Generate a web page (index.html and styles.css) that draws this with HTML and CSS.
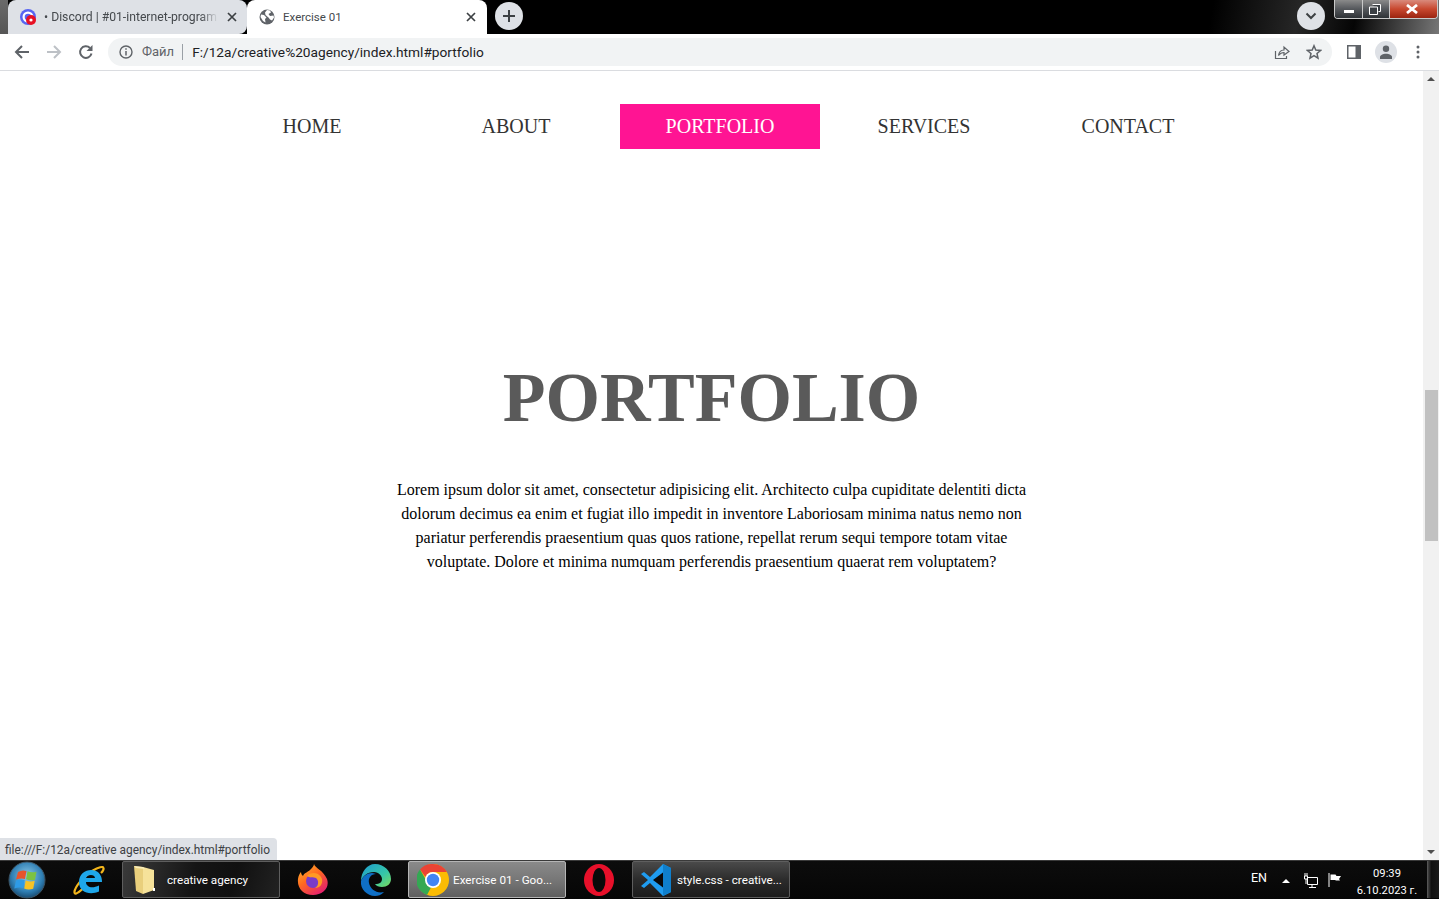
FILE: index.html
```html
<!DOCTYPE html>
<html lang="en">
<head>
<meta charset="utf-8">
<title>Exercise 01</title>
<link rel="stylesheet" href="styles.css">
</head>
<body>
<div class="screen">
  <header class="tabstrip">
    <div class="tab tab-inactive">
      <svg class="favicon" width="16" height="16" viewBox="0 0 16 16"><circle cx="8" cy="8" r="8" fill="#5865f2"/><circle cx="8" cy="8" r="4.4" fill="none" stroke="#fff" stroke-width="2.2"/><circle cx="11" cy="11" r="5" fill="#e81123"/><circle cx="11" cy="11" r="1.6" fill="#fff"/></svg>
      <span class="tab-title fade">• Discord | #01-internet-program</span>
      <svg class="tab-close" width="10" height="10" viewBox="0 0 10 10"><path d="M1 1l8 8M9 1l-8 8" stroke="#3c4043" stroke-width="1.7"/></svg>
    </div>
    <div class="tab tab-active">
      <svg class="favicon" width="16" height="16" viewBox="0 0 16 16"><circle cx="8" cy="8" r="7.5" fill="#5f6368"/><path d="M2 5.500l3 .5 2.500 2.500L6 10l.5 3.500L4 12 1.500 8zM8 1l3 .5 1 2-2.500 1.500L11 7l3.500-.5.500 2-2 3-2-1-1.500-2L6.500 6 6 3.500z" fill="#fff"/></svg>
      <span class="tab-title">Exercise 01</span>
      <svg class="tab-close" width="10" height="10" viewBox="0 0 10 10"><path d="M1 1l8 8M9 1l-8 8" stroke="#3c4043" stroke-width="1.700"/></svg>
    </div>
    <div class="round-btn new-tab"><svg width="14" height="14" viewBox="0 0 14 14"><path d="M7 1v12M1 7h12" stroke="#3c4043" stroke-width="2"/></svg></div>
    <div class="strip-spacer"></div>
    <div class="round-btn tab-search"><svg width="12" height="8" viewBox="0 0 12 8"><path d="M1.500 1.500L6 6l4.500-4.500" fill="none" stroke="#3c4043" stroke-width="2"/></svg></div>
    <div class="window-btns">
      <div class="win-btn win-min"><span class="win-min-bar"></span></div>
      <div class="win-btn win-max"><svg width="12" height="11" viewBox="0 0 12 11"><path d="M3.500 .5h8v7h-2M.5 3h8v7.500h-8z" fill="#3a3f44" stroke="#fff"/></svg></div>
      <div class="win-btn win-close"><svg width="14" height="10" viewBox="0 0 14 10"><path d="M2 1l10 8M12 1L2 9" stroke="#fff" stroke-width="2.800"/></svg></div>
    </div>
  </header>

  <div class="toolbar">
    <svg class="tool-icon" width="16" height="16" viewBox="0 0 16 16"><path d="M15 8H2M8 2L2 8l6 6" fill="none" stroke="#5f6368" stroke-width="2"/></svg>
    <svg class="tool-icon" width="16" height="16" viewBox="0 0 16 16"><path d="M1 8h13M8 2l6 6-6 6" fill="none" stroke="#bdc1c6" stroke-width="2"/></svg>
    <svg class="tool-icon" width="16" height="16" viewBox="0 0 16 16"><path d="M13.500 9.500A5.800 5.800 0 1 1 12 4" fill="none" stroke="#5f6368" stroke-width="2"/><path d="M14.500 1v6h-6z" fill="#5f6368"/></svg>
    <div class="omnibox">
      <svg class="info" width="14" height="14" viewBox="0 0 14 14"><circle cx="7" cy="7" r="6" fill="none" stroke="#5f6368" stroke-width="1.400"/><path d="M7 6v4.500M7 3.300v1.500" stroke="#5f6368" stroke-width="1.500"/></svg>
      <span class="scheme">Файл</span>
      <span class="sep"></span>
      <span class="url">F:/12a/creative%20agency/index.html#portfolio</span>
      <span class="omni-spacer"></span>
      <svg class="omni-icon" width="16" height="16" viewBox="0 0 16 16"><path d="M1.500 7v7.500h11V12" fill="none" stroke="#5f6368" stroke-width="1.200"/><path d="M4.500 11.500C5 8 7.500 6 10 6V3l5 4.500L10 11V8.500c-2 0-4 1-5.500 3z" fill="none" stroke="#5f6368" stroke-width="1.200"/></svg>
      <svg class="omni-icon" width="16" height="16" viewBox="0 0 16 16"><path d="M8 1.800l1.800 4.300 4.700.4-3.500 3 1 4.600L8 11.700l-4 2.400 1-4.600-3.500-3 4.700-.4z" fill="none" stroke="#5f6368" stroke-width="1.500"/></svg>
    </div>
    <svg class="side-icon" width="14" height="14" viewBox="0 0 14 14"><path d="M0 0h14v14H0z" fill="#5f6368"/><path d="M1.500 1.500h7v11h-7z" fill="#fff"/></svg>
    <div class="avatar"><svg width="14" height="14" viewBox="0 0 14 14"><circle cx="7" cy="3.800" r="3.200" fill="#5f6368"/><path d="M1 14v-2c0-2 3-3.300 6-3.300s6 1.300 6 3.300v2z" fill="#5f6368"/></svg></div>
    <svg class="menu-icon" width="4" height="14" viewBox="0 0 4 14"><circle cx="2" cy="2" r="1.500" fill="#5f6368"/><circle cx="2" cy="7" r="1.500" fill="#5f6368"/><circle cx="2" cy="12" r="1.500" fill="#5f6368"/></svg>
  </div>

  <div class="viewport">
    <main class="page">
      <nav class="nav">
        <a class="nav-link">HOME</a>
        <a class="nav-link">ABOUT</a>
        <a class="nav-link nav-active">PORTFOLIO</a>
        <a class="nav-link">SERVICES</a>
        <a class="nav-link">CONTACT</a>
      </nav>
      <section class="portfolio">
        <h1>PORTFOLIO</h1>
        <p>Lorem ipsum dolor sit amet, consectetur adipisicing elit. Architecto culpa cupiditate delentiti dicta dolorum decimus ea enim et fugiat illo impedit in inventore Laboriosam minima natus nemo non pariatur perferendis praesentium quas quos ratione, repellat rerum sequi tempore totam vitae voluptate. Dolore et minima numquam perferendis praesentium quaerat rem voluptatem?</p>
      </section>
    </main>
    <aside class="scrollbar">
      <span class="arrow-up"></span>
      <span class="thumb"></span>
      <span class="arrow-down"></span>
    </aside>
    <div class="status">file:///F:/12a/creative agency/index.html#portfolio</div>
  </div>

  <footer class="taskbar">
    <div class="start">
      <svg width="38" height="38" viewBox="0 0 38 38"><defs><radialGradient id="orb" cx=".5" cy=".4" r=".7"><stop offset="0" stop-color="#8fcbea"/><stop offset=".6" stop-color="#2f7fb4"/><stop offset="1" stop-color="#0d2f4c"/></radialGradient></defs><circle cx="19" cy="19" r="18" fill="url(#orb)" stroke="#3d5566"/><path d="M10 11q4-2.500 8.500-1l-1.500 8q-4-1.300-9 .5z" fill="#e8542c"/><path d="M19.500 10.300q4 1.800 9 .5l-1.500 8q-5 1.300-9-.5z" fill="#7cc242"/><path d="M8 19.500q4.500-1.800 8.700-.5l-1.400 8q-4.300-1.300-9 .5z" fill="#2e9be6"/><path d="M17.700 19.400q4.300 1.800 9 .4l-1.500 8q-5 1.500-9-.3z" fill="#f7c325"/></svg>
    </div>
    <div class="slot">
      <svg width="34" height="34" viewBox="0 0 34 34"><path d="M10.500 26C5 31 2 32 2.500 28.500 3 25 9 15 20 8c7-4 11-5 11.500-3 .5 1.500-1 3.500-2.500 5" fill="none" stroke="#f3b51b" stroke-width="2.200"/><path d="M30 19H14c0 5 6 7 13 3.500v6c-9 4-20 1-20-9.500C7 9 17 5 24 8c4 2 6 6 6 11zm-7-4c0-4-8-4-9 0z" fill="#1ea7ea"/></svg>
    </div>
    <div class="task">
      <svg class="task-icon" width="26" height="32" viewBox="0 0 26 32"><path d="M2 2l9 1v27l-7-3z" fill="#e9cf7c"/><path d="M11 3l11 3v20l-11 4z" fill="#f6e29a"/><path d="M2 2l9 1 2 2-9-1z" fill="#f9edba"/><path d="M21 24h2v3h-2z" fill="#fff"/></svg>
      <span class="task-label">creative agency</span>
    </div>
    <div class="slot">
      <svg width="32" height="32" viewBox="0 0 32 32"><defs><linearGradient id="ff" x1="0" y1="0" x2=".7" y2="1"><stop offset="0" stop-color="#ffbd2e"/><stop offset=".5" stop-color="#ff6a1f"/><stop offset="1" stop-color="#e5206e"/></linearGradient></defs><path d="M17 0c1 4 9 6 13 15 3 9-4 16-14 16C6 31 0 24 1 15c.3-3 2-6 3-7 0 2 1 3 2 4 1-3 5-4 7-6 2-2 4-4 4-6z" fill="url(#ff)"/><circle cx="16" cy="17" r="7" fill="#7a3bc8"/><path d="M10 12c2 2 7 1 9 2 3 2 3 8-1 10 5 0 8-4 7-9-1-3-4-6-8-6-3 0-6 1-7 3z" fill="#ff9a24"/></svg>
    </div>
    <div class="slot">
      <svg width="32" height="32" viewBox="0 0 32 32"><defs><linearGradient id="edge" x1="0" y1="0" x2="1" y2="1"><stop offset="0" stop-color="#1d9bd1"/><stop offset=".6" stop-color="#36c7a7"/><stop offset="1" stop-color="#7ddb5b"/></linearGradient></defs><path d="M16 0c9 0 16 7 16 15 0 5-4 8-9 8-3 0-6-1-7-3 5 0 7-2 7-5 0-3-3-7-8-7C8 8 4 12 2 17 2 8 8 0 16 0z" fill="url(#edge)"/><path d="M2 17c2-5 6-8 11-8 2 0 3 1 4 1-5 0-8 4-7 9 1 6 8 11 15 9-3 3-6 4-9 4C8 32 1 25 2 17z" fill="#0f6fc6"/></svg>
    </div>
    <div class="task task-lit">
      <svg class="task-icon chrome" width="32" height="32" viewBox="0 0 32 32"><circle cx="16" cy="16" r="16" fill="#fbbc04"/><path d="M16 0a16 16 0 0 1 13.860 8H16a8 8 0 0 0-7.500 5L3 5.500A16 16 0 0 1 16 0z" fill="#ea4335"/><path d="M3 5.500L9 16a7 7 0 0 0 5 7.500L10 31A16 16 0 0 1 3 5.500z" fill="#34a853"/><circle cx="16" cy="16" r="8" fill="#fff"/><circle cx="16" cy="16" r="6.200" fill="#4285f4"/></svg>
      <span class="task-label">Exercise 01 - Goo...</span>
    </div>
    <div class="slot">
      <svg width="30" height="32" viewBox="0 0 30 32"><ellipse cx="15" cy="16" rx="15" ry="16" fill="#e8102a"/><ellipse cx="15" cy="16" rx="6.500" ry="12" fill="#0a0a0a"/></svg>
    </div>
    <div class="task task-dim">
      <svg class="task-icon vscode" width="32" height="32" viewBox="0 0 32 32"><path d="M23 0l8 4v24l-8 4-13-13-6 5-3-2 7-6-7-6 3-2 6 5z" fill="#1f9cf0"/><path d="M23 8.500L13 16l10 7.500z" fill="#0a0a0a"/><path d="M23 0l8 4v24l-8 4z" fill="#0f7fcc"/></svg>
      <span class="task-label">style.css - creative...</span>
    </div>
    <div class="tray">
      <span class="tray-lang">EN</span>
      <span class="tray-up"></span>
      <svg class="tray-net" width="14" height="15" viewBox="0 0 14 15"><path d="M3.500 4.500h10v7h-10z" fill="none" stroke="#fff"/><path d="M8 12v2M5 14.500h7M1 0v3M3 0v3M.5 3h3v3h-3zM2 6v5" stroke="#fff"/></svg>
      <svg class="tray-flag" width="14" height="14" viewBox="0 0 14 14"><path d="M1 0v14" stroke="#fff"/><path d="M2.500 1.500h5l1 1.500H13l-2 3 1 1.500H8L7 7H2.500z" fill="#fff"/></svg>
      <div class="clock"><div>09:39</div><div>6.10.2023 г.</div></div>
      <span class="show-desktop"></span>
    </div>
  </footer>
</div>
</body>
</html>
```
FILE: styles.css
```css
* { box-sizing: border-box; }
html, body { margin: 0; height: 100%; overflow: hidden; }
body { font-family: "Liberation Serif", "Times New Roman", serif; background: #fff; }
.screen { width: 1439px; height: 899px; display: flex; flex-direction: column; }

/* tab strip */
.tabstrip {
  height: 34px; flex: none; display: flex; align-items: flex-start; padding-left: 8px;
  background: linear-gradient(100deg, #000 0 84%, #262626 90%, #050505 94%, #777 100%);
  font-family: Roboto, "Open Sans", sans-serif; font-size: 12px; color: #3c4043;
  position: relative;
}
.tabstrip::before { content: ""; position: absolute; left: 0; top: 0; width: 8px; height: 34px; background: linear-gradient(#6a6a6a, #555); }
.tab { width: 240px; height: 34px; display: flex; align-items: center; padding: 0 11px 0 12px; border-radius: 8px 8px 0 0; position: relative; }
.tab-inactive { width: 239px; background: #dee1e6; padding-right: 10px; border-radius: 8px 8px 8px 0; }
.tab-active { background: #fff; }
.favicon { flex: none; margin-right: 8px; }
.tab-title { flex: 1; white-space: nowrap; overflow: hidden; font-size: 11.500px; color: #45494d; }
.tab-inactive .tab-title { margin-right: 9px; font-size: 12.200px; }
.fade { -webkit-mask-image: linear-gradient(90deg, #000 90%, transparent); mask-image: linear-gradient(90deg, #000 90%, transparent); }
.tab-close { flex: none; }
.round-btn { width: 28px; height: 28px; border-radius: 50%; background: #dee1e6; display: flex; align-items: center; justify-content: center; flex: none; margin-top: 2px; }
.new-tab { margin-left: 8px; }
.strip-spacer { flex: 1; }
.tab-search { margin-right: 9px; }
.window-btns { display: flex; width: 104px; height: 19px; border: 1px solid #c9c9c9; border-top: 0; border-radius: 0 0 4px 4px; margin-right: 1px; overflow: hidden; flex: none; }
.win-btn { height: 18px; display: flex; align-items: center; justify-content: center; }
.win-min, .win-max { background: linear-gradient(#8a8a8a, #55585c 50%, #2e3236); border-right: 1px solid #c9c9c9; }
.win-min { width: 28px; align-items: flex-end; padding-bottom: 5px; }
.win-max { width: 27px; padding-right: 2px; }
.win-min-bar { width: 10px; height: 3px; background: #fff; display: block; }
.win-close { flex: 1; background: linear-gradient(#d98a7c, #c8482f 50%, #9b2410); padding-right: 3px; }

/* toolbar */
.toolbar {
  height: 37px; flex: none; display: flex; align-items: center; background: #fff;
  border-bottom: 1px solid #dadce0; padding: 0 0 1px 14px;
  font-family: Roboto, "Open Sans", sans-serif;
}
.tool-icon { flex: none; margin-right: 16px; }
.omnibox { width: 1224px; height: 28px; margin-left: -2px; flex: none; border-radius: 14px; background: #f1f3f4; display: flex; align-items: center; padding-left: 11px; }
.info { flex: none; }
.scheme { font-size: 13px; color: #5f6368; margin-left: 9px; }
.sep { width: 1px; height: 16px; background: #9aa0a6; margin: 0 9px 0 8px; }
.url { font-size: 13.700px; color: #202124; white-space: nowrap; }
.omni-spacer { flex: 1; }
.omni-icon { flex: none; margin-right: 10px; margin-left: 6px; }
.side-icon { flex: none; margin-left: 15px; }
.avatar { width: 22px; height: 22px; border-radius: 50%; background: #dee1e6; display: flex; align-items: center; justify-content: center; margin-left: 14px; flex: none; }
.menu-icon { flex: none; margin-left: 19px; }

/* page */
.viewport { flex: 1; min-height: 0; display: flex; position: relative; }
.page { flex: 1; min-width: 0; background: #fff; }
.nav { display: flex; gap: 4px; margin: 33px 0 0 212px; }
.nav-link { width: 200px; height: 45px; line-height: 45px; text-align: center; font-size: 20px; color: #333; }
.nav-active { background: #ff1493; color: #fff; }
.portfolio { text-align: center; padding-top: 207px; }
.portfolio h1 { margin: 0; font-size: 70px; line-height: 83px; font-weight: 700; color: #5a5a5a; }
.portfolio p { width: 640px; margin: 39px auto 0; font-size: 16px; line-height: 24px; color: #000; }
.scrollbar { width: 16px; flex: none; background: #f1f1f1; position: relative; }
.arrow-up, .arrow-down { width: 0; height: 0; border-left: 4px solid transparent; border-right: 4px solid transparent; position: absolute; left: 4px; }
.arrow-up { top: 6px; border-bottom: 4px solid #505050; }
.arrow-down { bottom: 6px; border-top: 4px solid #505050; }
.thumb { position: absolute; top: 319px; left: 2px; width: 13px; height: 151px; background: #c1c1c1; }
.status {
  position: absolute; left: 0; bottom: 0; width: 277px; height: 22px; padding: 0 0 0 5px; line-height: 25px;
  background: #dee1e6; border-radius: 0 4px 0 0; font-family: Roboto, "Open Sans", sans-serif; font-size: 11.900px; color: #3c4043; white-space: nowrap;
}

/* taskbar */
.taskbar {
  height: 39px; flex: none; display: flex; align-items: center; gap: 4px;
  background: linear-gradient(#0c0c0c, #060606); border-top: 1px solid #3a3a3a; padding-bottom: 1px;
  font-family: Roboto, "Open Sans", sans-serif; color: #fff; font-size: 12px;
}
.start { width: 56px; height: 37px; display: flex; align-items: center; justify-content: flex-end; padding-right: 10px; flex: none; }
.slot { width: 58px; height: 37px; display: flex; align-items: center; justify-content: center; flex: none; }
.task { width: 158px; height: 37px; display: flex; align-items: center; border: 1px solid #5e5e5e; border-radius: 2px; flex: none; padding-left: 9px; overflow: hidden; background: linear-gradient(105deg, #3a3a3a, #151515 45%, #101010 70%, #222); }
.task-icon { flex: none; margin-right: 9px; }
.chrome { margin-right: 4px; }
.vscode { margin-right: 5px; margin-left: -2px; }
.task-lit { border-color: #b5b5b5; background: linear-gradient(#8a8a8a, #777 50%, #5f5f5f); padding-left: 8px; }
.task-dim { background: linear-gradient(#4a4a4a, #2c2c2c 50%, #1c1c1c); }
.task-label { white-space: nowrap; font-size: 11.700px; color: #fff; }
.tray { flex: 1; display: flex; align-items: center; height: 37px; min-width: 0; padding-left: 457px; }
.tray-lang { font-size: 12.500px; width: 31px; margin-top: -4px; }
.tray-up { width: 0; height: 0; border-left: 4px solid transparent; border-right: 4px solid transparent; border-bottom: 4px solid #fff; margin-top: 2px; }
.tray-net { margin-left: 14px; flex: none; margin-top: 2px; }
.tray-flag { margin-left: 10px; flex: none; }
.clock { width: 76px; margin-left: 7px; margin-top: 4px; text-align: center; font-size: 11.200px; line-height: 17px; }
.show-desktop { width: 12px; height: 37px; margin-left: auto; flex: none; background: linear-gradient(90deg, #444, #111 30%, #1a1a1a); border-left: 1px solid #555; }
```
